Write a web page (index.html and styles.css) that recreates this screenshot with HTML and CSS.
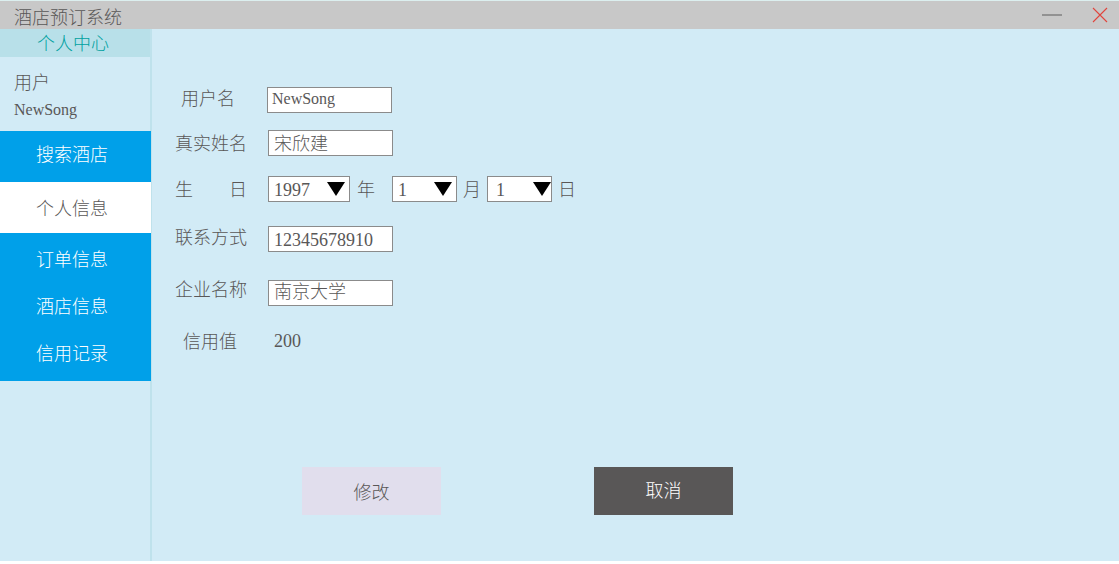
FILE: index.html
```html
<!DOCTYPE html>
<html lang="zh-CN">
<head>
<meta charset="utf-8">
<title>酒店预订系统</title>
<link rel="stylesheet" href="styles.css">
</head>
<body>
<div class="window">
  <header class="titlebar">
    <h1 class="title">酒店预订系统</h1>
    <div class="controls">
      <button class="control" type="button" aria-label="最小化"><svg width="20" height="16" viewBox="0 0 20 16"><path d="M0 8h20" stroke="#7c7c7c" stroke-width="1.4"/></svg></button>
      <button class="control" type="button" aria-label="关闭"><svg width="16" height="16" viewBox="0 0 16 16"><path d="M1 1l14 14M15 1L1 15" stroke="#e0443c" stroke-width="1.1" fill="none"/></svg></button>
    </div>
  </header>
  <div class="body">
    <aside class="sidebar">
      <h2 class="section">个人中心</h2>
      <div class="user"><p>用户</p><p class="user-name">NewSong</p></div>
      <nav class="menu">
        <a class="item item-search" href="#search">搜索酒店</a>
        <a class="item item-active" href="#profile" aria-current="page">个人信息</a>
        <div class="group">
          <a class="item" href="#orders">订单信息</a>
          <a class="item" href="#hotels">酒店信息</a>
          <a class="item" href="#credit">信用记录</a>
        </div>
      </nav>
    </aside>
    <main class="main">
      <form class="form">
        <div class="row row-user">
          <label class="label" for="user">用户名</label>
          <input class="field field-user" id="user" type="text" value="NewSong">
        </div>
        <div class="row row-name">
          <label class="label" for="name">真实姓名</label>
          <input class="field" id="name" type="text" value="宋欣建">
        </div>
        <div class="row row-birth">
          <label class="label label-spread" for="year"><span>生</span><span>日</span></label>
          <div class="dates">
            <span class="picker picker-year"><select class="field" id="year"><option>1997</option></select><svg class="arrow" width="18" height="14" viewBox="0 0 18 14"><path d="M0 0h18L9 14z"/></svg></span>
            <label class="unit unit-year" for="year">年</label>
            <span class="picker"><select class="field" id="month"><option>1</option></select><svg class="arrow" width="18" height="14" viewBox="0 0 18 14"><path d="M0 0h18L9 14z"/></svg></span>
            <label class="unit" for="month">月</label>
            <span class="picker picker-day"><select class="field" id="day"><option>1</option></select><svg class="arrow" width="18" height="14" viewBox="0 0 18 14"><path d="M0 0h18L9 14z"/></svg></span>
            <label class="unit" for="day">日</label>
          </div>
        </div>
        <div class="row row-phone">
          <label class="label" for="phone">联系方式</label>
          <input class="field" id="phone" type="text" value="12345678910">
        </div>
        <div class="row row-company">
          <label class="label" for="company">企业名称</label>
          <input class="field" id="company" type="text" value="南京大学">
        </div>
        <div class="row row-credit">
          <label class="label" for="credit">信用值</label>
          <output class="value" id="credit">200</output>
        </div>
        <div class="actions">
          <button class="button button-edit" type="button">修改</button>
          <button class="button button-cancel" type="button">取消</button>
        </div>
      </form>
    </main>
  </div>
</div>
</body>
</html>
```
FILE: styles.css
```css
* { box-sizing: border-box; }

body {
  margin: 0;
  background: #fff;
  color: #595757;
  font: 300 18px/26px "Liberation Serif", "Noto Sans CJK SC", sans-serif;
}

h1, h2, p { margin: 0; font-size: 18px; font-weight: 300; }

.window {
  display: flex;
  flex-direction: column;
  min-height: calc(100vh - 3px);
  border-top: 1px solid #dcefef;
  background: #d2ebf6;
}

.titlebar {
  display: flex;
  justify-content: space-between;
  align-items: center;
  height: 28px;
  padding: 0 11px 0 14px;
  background: #c8c8c8;
}

.title { padding-top: 6px; }
.controls { display: flex; gap: 30px; }

.control {
  display: flex;
  padding: 0;
  border: 0;
  background: none;
}

.body { display: flex; flex: 1; }

.sidebar {
  flex: none;
  width: 152px;
  border-right: 2px solid #bfe2ec;
}

.section {
  height: 28px;
  padding-right: 4px;
  background: #b8e0e9;
  color: #00a0a0;
  line-height: 30px;
  text-align: center;
}

.user { padding: 13px 14px 9px; }
.user p { line-height: 27px; }

.user .user-name {
  font-size: 16px;
  line-height: 25px;
}

.menu {
  margin-right: -1px;
  background: #00a0e9;
}

.item {
  display: block;
  padding-right: 7px;
  color: #fff;
  line-height: 47px;
  text-align: center;
  text-decoration: none;
}

.item-search { padding: 1px 7px 3px 0; }

.item-active {
  padding-top: 4px;
  background: #fff;
  color: #595757;
}

.group { padding: 4px 0 3px; }

.main {
  flex: 1;
  padding: 58px 20px 45px 23px;
}

.row {
  display: flex;
  align-items: flex-start;
}

.row-user { margin-bottom: 17px; }
.row-name { margin-bottom: 18px; }
.row-birth { margin-bottom: 22px; }
.row-phone { margin-bottom: 28px; }
.row-company { margin-bottom: 22px; }

.label {
  flex: none;
  width: 72px;
  margin-right: 21px;
  line-height: 28px;
  text-align: center;
}

.row-user .label {
  width: 66px;
  margin-right: 26px;
  line-height: 24px;
}

.row-phone .label { line-height: 24px; }
.row-company .label { line-height: 20px; }

.row-credit .label { padding-right: 2px; }

.label-spread {
  display: flex;
  justify-content: space-between;
}

.field {
  width: 125px;
  height: 26px;
  padding: 0 5px;
  border: 1px solid #8b8b8b;
  border-radius: 0;
  background: #fff;
  color: #595757;
  font: inherit;
}

#name { padding-top: 2px; }

.field-user {
  padding: 0 4px 2px;
  font-size: 16px;
}

.row-phone .field { padding-top: 2px; }
.row-company .field { padding-bottom: 2px; }

.dates { display: flex; }

.picker {
  position: relative;
  width: 65px;
  height: 26px;
}

.picker .field {
  width: 100%;
  appearance: none;
}

.picker-year { width: 82px; }
.picker-day .field { padding-left: 8px; }

.arrow {
  position: absolute;
  top: 6px;
  right: 5px;
  fill: #000;
  pointer-events: none;
}

.picker-day .arrow { right: 1px; }

.unit {
  margin: 0 6px;
  line-height: 28px;
}

.unit-year {
  margin-left: 7px;
  margin-right: 17px;
}

.value { padding-left: 6px; }

.actions {
  display: flex;
  gap: 153px;
  padding: 111px 0 0 127px;
}

.button {
  width: 139px;
  height: 48px;
  padding: 0;
  border: 0;
  font: inherit;
}

.button-edit {
  padding-top: 4px;
  background: #e1deed;
  color: #595757;
}

.button-cancel {
  background: #595757;
  color: #fff;
}
```
